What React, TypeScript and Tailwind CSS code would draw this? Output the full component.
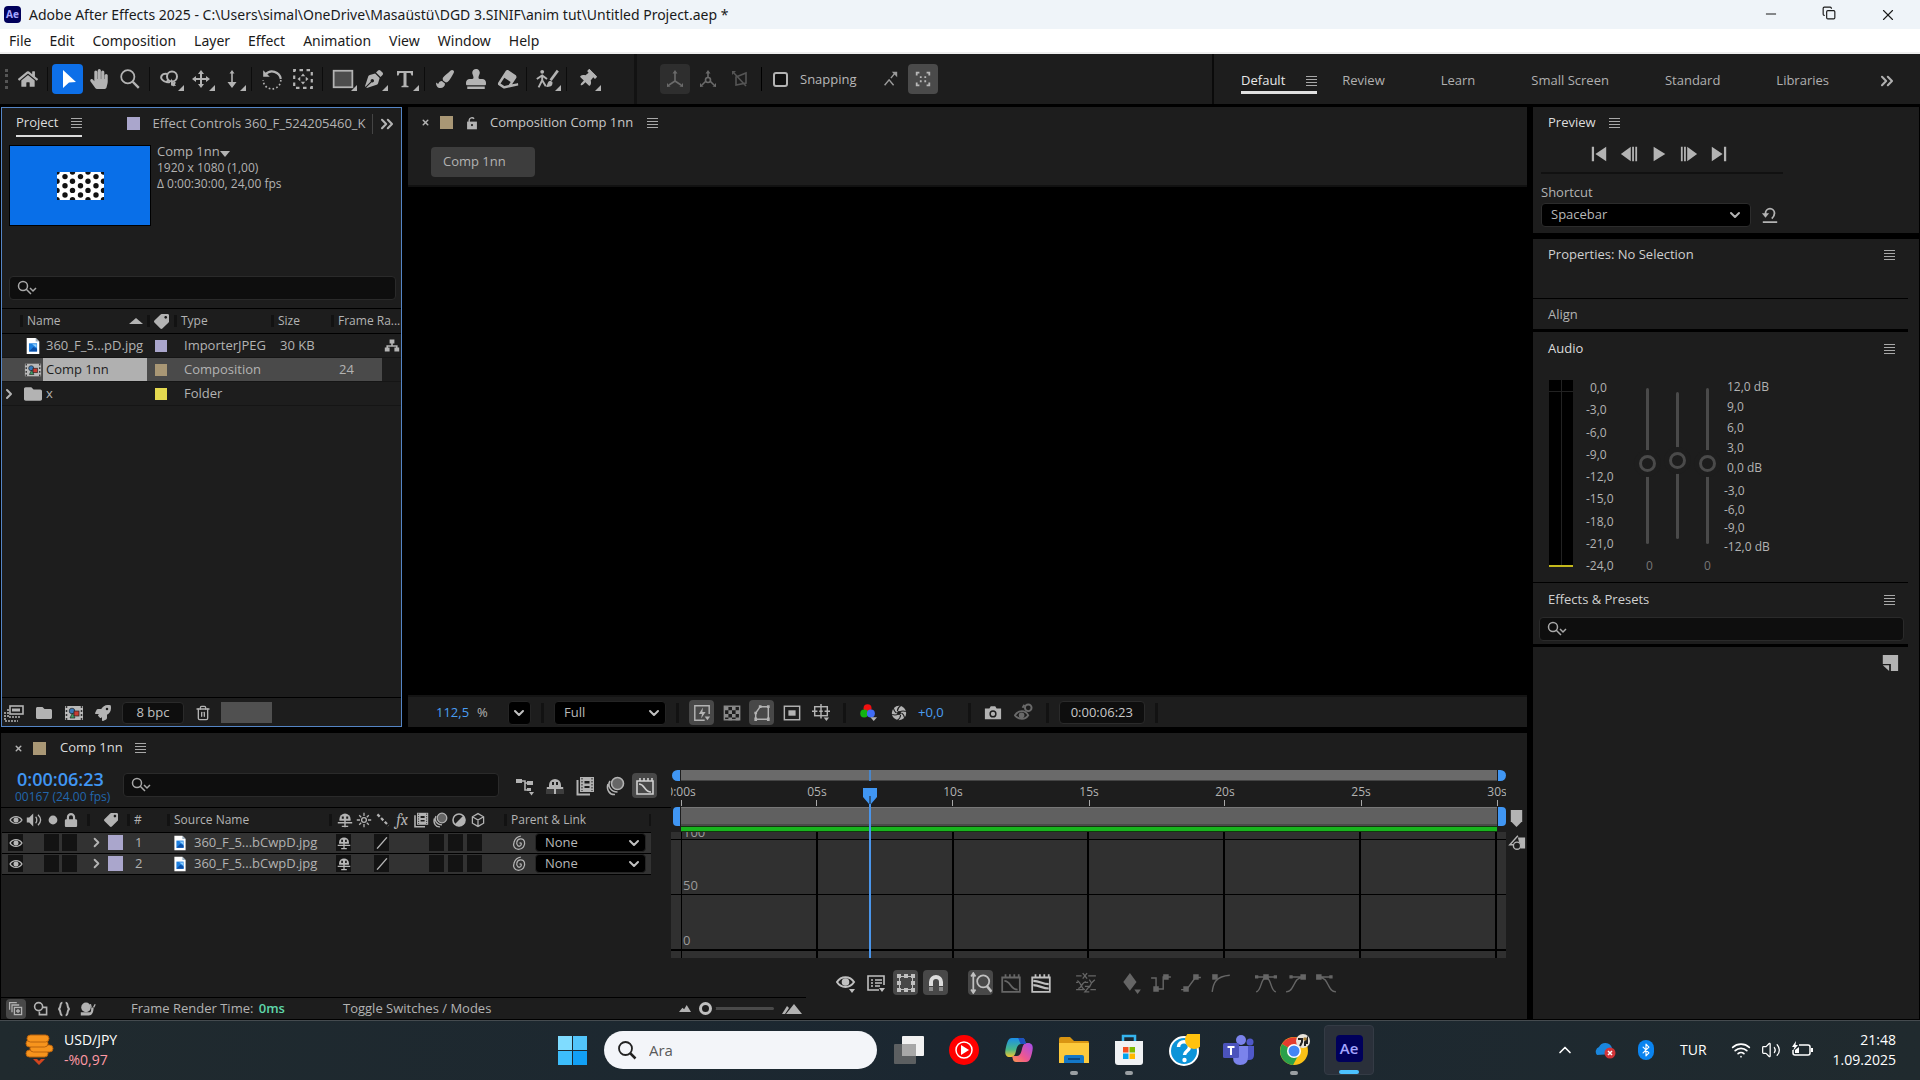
import React from "react";
import {
  Bluetooth,
  ChevronDown,
  ChevronRight,
  ChevronsRight,
  ChevronUp,
  Copy,
  Minus,
  Trash2,
  Volume2,
  Wifi,
  X,
} from "lucide-react";
import {
  FaEraser,
  FaFolder,
  FaHandPaper,
  FaHome,
  FaLock,
  FaPaintBrush,
  FaPenNib,
  FaRocket,
  FaStamp,
  FaTag,
  FaThumbtack,
} from "react-icons/fa";

const stroke = {
  fill: "none",
  stroke: "currentColor",
  strokeWidth: 1.6,
} as const;

const GLYPHS: Record<string, React.ReactNode> = {
  arrow: <path d="M5 1l13 12-7 .5L5 19z" fill="currentColor" />,
  zoom: (
    <g {...stroke}>
      <circle cx="8" cy="8" r="6" />
      <path d="M12.5 12.5L18 18" strokeWidth="2.2" />
    </g>
  ),
  orbit: (
    <g {...stroke} strokeWidth="2">
      <path d="M7 5C2 4 0 8 2 10.500s5 3 8 2.500" />
      <circle cx="12" cy="7.500" r="5" />
      <path d="M9 10.500l-3 3M15 13l-2 4" />
      <path d="M11 9.500v7l5 .5z" fill="currentColor" stroke="none" />
    </g>
  ),
  pan: (
    <g fill="currentColor">
      <path d="M10 1l3 4H7zM10 19l3-4H7zM1 10l4-3v6zM19 10l-4-3v6z" />
      <path d="M9 4h2v12H9zM4 9h12v2H4z" />
    </g>
  ),
  dolly: (
    <g fill="currentColor">
      <path d="M10 1l2.500 3.500h-5zM10 19l4.500-6h-9z" />
      <path d="M9.200 3h1.600v11H9.200z" />
    </g>
  ),
  rotate: (
    <g {...stroke} strokeWidth="2">
      <path d="M4 6a8 8 0 0 1 14 4" />
      <path d="M18 11a8 8 0 0 1-16 0" strokeDasharray="1.500 2" strokeWidth="1.500" />
      <path d="M2 2v6h6z" fill="currentColor" stroke="none" />
    </g>
  ),
  anchor: (
    <g {...stroke}>
      <rect x="2" y="2" width="16" height="16" strokeDasharray="3.200 3.200" strokeDashoffset="1.600" strokeWidth="2" />
      <path d="M10 5l2 2.500H8zM10 15l2-2.500H8zM5 10l2.500-2v4zM15 10l-2.500-2v4z" fill="currentColor" stroke="none" />
    </g>
  ),
  rect: (
    <rect x="1.500" y="2.500" width="17" height="15" fill="#4d4d4d" stroke="currentColor" strokeWidth="1.600" />
  ),
  type: (
    <path d="M2 2h16v4.500h-1.500L15.500 4h-4v12.500l2 .5v1.200h-7V17l2-.5V4h-4l-1 2.500H2z" fill="currentColor" />
  ),
  roto: (
    <g {...stroke}>
      <circle cx="6" cy="4" r="1.600" fill="currentColor" stroke="none" />
      <path d="M6 7v4l-3 6M6 11l3 5M1.500 10L6 7l4 3" />
      <path d="M19 3l-6 8" strokeWidth="2.200" />
      <path d="M13 11.500c-3 0-2 3.500-4 5 4 .5 6-1 5.500-4z" fill="currentColor" stroke="none" />
    </g>
  ),
  axisLocal: (
    <g {...stroke}>
      <path d="M10 3v9M10 12l-6 4M10 12l6 4" />
      <path d="M10 1l2.500 3.500h-5zM2 18v-4l3.500 3.500zM18 18v-4l-3.500 3.500z" fill="currentColor" stroke="none" />
    </g>
  ),
  axisWorld: (
    <g {...stroke}>
      <path d="M10 3v5M8 12l-4 4M12 12l4 4" />
      <circle cx="10" cy="11" r="2.500" />
      <path d="M10 1l2.500 3.500h-5zM2 18v-4l3.500 3.500zM18 18v-4l-3.500 3.500z" fill="currentColor" stroke="none" />
    </g>
  ),
  axisView: (
    <g {...stroke}>
      <path d="M3 3l13 14M6 8v8l10-2V4z" />
      <path d="M2 2h4L2 6z" fill="currentColor" stroke="none" />
    </g>
  ),
  snapEdge: (
    <g {...stroke}>
      <path d="M4 17l5-6 5 6M11 9l4-5" />
      <path d="M12 2h6v6z" fill="currentColor" stroke="none" />
    </g>
  ),
  snapBox: (
    <g {...stroke}>
      <path d="M3 6V3h3M14 3h3v3M17 14v3h-3M6 17H3v-3" strokeWidth="2" />
      <path d="M6.500 7h2v2h-2zM11.500 7h2v2h-2zM6.500 11.500h2v2h-2zM11.500 11.500h2v2h-2z" fill="currentColor" stroke="none" />
    </g>
  ),
  film: (
    <g>
      <rect x="1" y="3" width="18" height="14" fill="#b9b9b9" />
      <path d="M2.500 3v14M17.500 3v14" stroke="#333" strokeWidth="1.500" strokeDasharray="2 2" />
      <circle cx="8" cy="8" r="2.800" fill="#3a78b8" stroke="#222" strokeWidth=".7" />
      <rect x="10" y="8" width="5" height="5" fill="#c83c32" stroke="#222" strokeWidth=".7" />
      <path d="M8.500 10l2.500 5H6z" fill="#3f9a63" stroke="#222" strokeWidth=".7" />
    </g>
  ),
  jpg: (
    <g>
      <path d="M3 1h10l4 4v14H3z" fill="#fff" />
      <path d="M13 1v4h4z" fill="#9fb0c0" />
      <rect x="5.500" y="7" width="9" height="9" fill="#1c7fe0" />
      <path d="M5.500 16l5-5 4 2v3z" fill="#0b4fa8" />
      <path d="M9 8h5v4z" fill="#8fd0ff" />
    </g>
  ),
  flow: (
    <path
      d="M7 2h6v5h-2v2h6v3h2v5h-6v-5h2v-1H5v1h2v5H1v-5h2V9h6V7H7z"
      fill="currentColor"
    />
  ),
  interpret: (
    <g {...stroke}>
      <rect x="6" y="3" width="13" height="8" />
      <path d="M8 7h8" strokeWidth="3" />
      <path d="M4 6v8h12M1 9v9h13" strokeDasharray="2 1" />
    </g>
  ),
  fastPreview: (
    <g {...stroke}>
      <path d="M13 18H2V2h16v9" />
      <path d="M11 4l-4.500 7H10l-1 5 5-7h-3.500z" fill="currentColor" stroke="none" />
      <path d="M13 14h6l-3 4z" fill="currentColor" stroke="none" />
    </g>
  ),
  checker: (
    <g fill="currentColor">
      <rect x="1.500" y="2.500" width="17" height="15" {...stroke} />
      <path d="M2 3h4v4H2zM10 3h4v4h-4zM6 7h4v4H6zM14 7h4v4h-4zM2 11h4v4H2zM10 11h4v4h-4zM6 15h4v3H6zM14 15h4v3h-4z" />
    </g>
  ),
  mask: (
    <g {...stroke}>
      <path d="M3 17V10l5-7h9v14z" />
      <path d="M1.500 15h3v4h-3zM15.500 15h3v4h-3zM15.500 1.500h3v3h-3zM6.500 1.500h3v3h-3zM1.500 8.500h3v3h-3z" fill="currentColor" stroke="none" />
    </g>
  ),
  region: (
    <g {...stroke}>
      <rect x="1.500" y="2.500" width="17" height="15" />
      <rect x="6" y="7" width="8" height="6" fill="currentColor" stroke="none" />
    </g>
  ),
  grid: (
    <g {...stroke}>
      <rect x="3" y="3" width="14" height="10" />
      <path d="M10 0v16M0 8h6M8 8h4M14 8h6" />
      <path d="M13 15h6l-3 4z" fill="currentColor" stroke="none" />
    </g>
  ),
  rgb: (
    <g>
      <circle cx="9" cy="5.500" r="4.200" fill="#f01010" />
      <circle cx="5.500" cy="11" r="4.200" fill="#13b313" />
      <circle cx="12.500" cy="11" r="4.200" fill="#3f6bf5" />
      <path d="M12 15h7l-3.500 4z" fill="currentColor" />
    </g>
  ),
  aperture: (
    <g>
      <circle cx="10" cy="10" r="9" fill="currentColor" />
      <path
        d="M12 1c-3 2-4 3-4 6.500M18.500 8c-4-1-5.500-1-7.500 1M17 16c-1-4-1.500-5-4-6M8 19c3-2 4-3 4-6.500M1.500 12c4 1 5.500 1 7.500-1M3 4c1 4 1.500 5 4 6"
        stroke="#1d1d1d"
        strokeWidth="1.300"
        fill="none"
      />
      <circle cx="10" cy="10" r="2.500" fill="#1d1d1d" />
    </g>
  ),
  camera: (
    <g>
      <path d="M1 5h5l1.500-2.500h5L14 5h5v12H1z" fill="currentColor" />
      <circle cx="10" cy="11" r="3.200" fill="none" stroke="#1d1d1d" strokeWidth="1.600" />
    </g>
  ),
  showSnap: (
    <g {...stroke} strokeWidth="2">
      <path d="M1 13c4-6 11-6 14 0-3 5-10 5-14 0z" />
      <circle cx="8" cy="13" r="2" fill="currentColor" />
      <circle cx="15" cy="5" r="3.500" />
      <path d="M9 5l2-3" />
    </g>
  ),
  eye: (
    <g {...stroke} strokeWidth="2">
      <path d="M1.500 10c4-6.500 13-6.500 17 0-4 6.500-13 6.500-17 0z" />
      <circle cx="10" cy="10" r="2.600" fill="currentColor" />
    </g>
  ),
  speaker: (
    <g {...stroke}>
      <path d="M1 7h3l5-5v16l-5-5H1z" fill="currentColor" stroke="none" />
      <path d="M12 6c2 2 2 6 0 8M15 3.500c4 4 4 9 0 13" />
    </g>
  ),
  dot: <circle cx="10" cy="10" r="5.500" fill="currentColor" />,
  shy: (
    <g>
      <path d="M3 9a7 7 0 0 1 14 0v2H3z" fill="currentColor" />
      <path d="M1 13.500h18M10 9v10M6 18h8" stroke="currentColor" strokeWidth="1.800" />
      <path d="M6 5.500h2.500v3H6zM11.500 5.500H14v3h-2.500z" fill="#1d1d1d" />
    </g>
  ),
  sun: (
    <g {...stroke}>
      <circle cx="10" cy="10" r="3" />
      <path d="M10 1v4M10 15v4M1 10h4M15 10h4M4 4l2.500 2.500M16 4l-2.500 2.500M4 16l2.500-2.500M16 16l-2.500-2.500" />
    </g>
  ),
  quality: (
    <path d="M3 3l14 14" {...stroke} strokeWidth="2.800" strokeDasharray="4 2.500" />
  ),
  slash: <path d="M3 18L17 2" {...stroke} strokeWidth="2" />,
  frames: (
    <g>
      <path d="M2.500 4v14.500H15" {...stroke} strokeWidth="2" />
      <rect x="5" y="1" width="14" height="15" fill="currentColor" />
      <path d="M7 2v13M17 2v13" stroke="#1d1d1d" strokeWidth="1" strokeDasharray="1.500 1.500" />
      <path d="M9.500 5h5v2.500h-5zM9.500 10h5v2h-5z" fill="#1d1d1d" />
    </g>
  ),
  blur: (
    <g {...stroke}>
      <circle cx="12.500" cy="7.500" r="6" fill="#666" />
      <path d="M5 5c-3 5 1 11 7.500 11M3 8c-2 6 2 11 7 10.500" />
    </g>
  ),
  adjust: (
    <g>
      <circle cx="10" cy="10" r="7.500" {...stroke} strokeWidth="2" />
      <path d="M15.500 4.500a7.700 7.700 0 0 1-11 11z" fill="currentColor" />
    </g>
  ),
  cube: (
    <path d="M10 2l7 4v8l-7 4-7-4V6zM3 6l7 4 7-4M10 10v8" {...stroke} />
  ),
  minimap: (
    <g fill="currentColor">
      <path d="M1 3h6v4H1zM12 5h6v4h-6zM12 12h4v3h-4z" />
      <path d="M7 5h3v9h3M10 7h3" {...stroke} />
      <path d="M14 16h5l-2.500 3.500z" />
    </g>
  ),
  shyBig: (
    <g>
      <path d="M1 11h18v7H1z" fill="#3d3d3d" />
      <path d="M4 9a6 6 0 0 1 12 0v2H4z" fill="currentColor" />
      <path d="M2 12h16M10 9v9" stroke="currentColor" strokeWidth="2" />
      <path d="M7 6h2v3H7zM11 6h2v3h-2z" fill="#1d1d1d" />
    </g>
  ),
  graph: (
    <g {...stroke}>
      <path d="M2 5h16v13H2zM5 5V2M9 5V2M13 5V2M17 5V2" />
      <path d="M4 8c6 0 5 8 12 8" />
    </g>
  ),
  graphLines: (
    <g {...stroke}>
      <path d="M2 5h16v13H2zM5 5V2M9 5V2M13 5V2M17 5V2" />
      <path d="M3 8c6 0 8 3 14 3M3 12c6 0 8 3 14 3" strokeWidth="2" />
    </g>
  ),
  whip: (
    <path
      d="M9.500 10.500c1.500-2 3 .5 1.500 2.500-2 2.500-6 0-5-4C7 4 14 3.500 15.500 8c1.500 5-2 10-7.500 10-5 0-7-5-5.500-9C4 4 7 2 11 1.500"
      {...stroke}
    />
  ),
  layersToggle: (
    <g {...stroke}>
      <path d="M2 11V2h9M5 14V5h9" />
      <rect x="8" y="8" width="9" height="9" />
      <path d="M12.500 10v5M10 12.500h5" />
    </g>
  ),
  modes: (
    <g {...stroke} strokeWidth="2">
      <circle cx="7" cy="7" r="5" />
      <path d="M12 8h5v9H8v-4" />
    </g>
  ),
  braces: (
    <path
      d="M8 2c-4 0-1 7-5 8 4 1 1 8 5 8M12 2c4 0 1 7 5 8-4 1-1 8-5 8"
      {...stroke}
      strokeWidth="2.400"
    />
  ),
  snail: (
    <g fill="currentColor">
      <circle cx="7.500" cy="8" r="6" />
      <path d="M1 14h11c2 0 2-3 2-6h3c0 6-2 10-6 10H1z" />
      <path d="M14 8l-1-4M17 8l2-4" {...stroke} />
    </g>
  ),
  list: (
    <g {...stroke}>
      <path d="M13 17H2V3h16v9" />
      <path d="M5 7h2M9 7h7M5 10h2M9 10h7M5 13h2M9 13h5" strokeWidth="1.500" />
      <path d="M13 15h6l-3 4z" fill="currentColor" stroke="none" />
    </g>
  ),
  eyeMenu: (
    <g {...stroke} strokeWidth="2">
      <path d="M1 9c4-6.500 13-6.500 17 0-4 6.500-13 6.500-17 0z" />
      <circle cx="9.500" cy="9" r="2.800" fill="currentColor" />
      <path d="M13 16h6l-3 4z" fill="currentColor" stroke="none" />
    </g>
  ),
  transform: (
    <g {...stroke}>
      <rect x="3.500" y="3.500" width="13" height="13" strokeWidth="1" />
      <path
        d="M1 1h4v4H1zM8 1h4v4H8zM15 1h4v4h-4zM1 8h4v4H1zM15 8h4v4h-4zM1 15h4v4H1zM8 15h4v4H8zM15 15h4v4h-4z"
        fill="currentColor"
        stroke="none"
      />
    </g>
  ),
  magnet: (
    <g fill="none" strokeWidth="4">
      <path d="M5 13V9a5 5 0 0 1 10 0v4" stroke="#dcdcdc" />
      <path d="M5 14v4M15 14v4" stroke="#8a8a8a" />
    </g>
  ),
  autoZoom: (
    <g {...stroke}>
      <path d="M3 2v16M1 4l2-3 2 3M1 16l2 3 2-3" />
      <circle cx="12" cy="8.500" r="5.500" />
      <path d="M15.500 13l4 5" strokeWidth="2.400" />
    </g>
  ),
  xyz: (
    <g {...stroke} strokeWidth="1.200">
      <path d="M1 3.500h5M12 3.500h7M1 9.500h2M9 9.500h3M1 16h7M14 16h5" />
      <path d="M7 1l4 5M11 1L7 6M13 7l2 3 3-3M15 10l-2 4M9 13h4l-4 5h4M2 8c3 0 4 8 7 8M3 15c3 0 3-6 7-6" />
    </g>
  ),
  diamond: (
    <g fill="currentColor">
      <path d="M9 1l6 8-6 8-6-8z" />
      <path d="M13 16h6l-3 4z" />
    </g>
  ),
  hold: (
    <g fill="currentColor">
      <path d="M3 13h5v5H3zM12 2h5v5h-5z" />
      <path d="M1 5.500h4.500V15M7 15.500h5V4.500h7" {...stroke} strokeWidth="1.300" />
    </g>
  ),
  linear: (
    <g fill="currentColor">
      <path d="M3 13h5v5H3zM12 2h5v5h-5z" />
      <path d="M1 16h5l8-11h5" {...stroke} strokeWidth="1.300" />
    </g>
  ),
  autoBez: (
    <g fill="currentColor">
      <path d="M2 2h5v5H2z" />
      <path d="M2 18C3 10 5 4 18 3" {...stroke} strokeWidth="1.300" />
    </g>
  ),
  easy: (
    <g fill="currentColor">
      <path d="M7.500 2h5v5h-5zM0 3h3v3H0zM17 3h3v3h-3z" />
      <path d="M1 4.500h18M1 18c5 0 4-13 9-13s4 13 9 13" {...stroke} strokeWidth="1.300" />
    </g>
  ),
  easeIn: (
    <g fill="currentColor">
      <path d="M14 2h5v5h-5zM4 3h3v3H4z" />
      <path d="M5 4.500h12M1 18c8 0 6-13 15-13" {...stroke} strokeWidth="1.300" />
    </g>
  ),
  easeOut: (
    <g fill="currentColor">
      <path d="M1 2h5v5H1zM13 3h3v3h-3z" />
      <path d="M3 4.500h12M4 5c9 0 7 13 15 13" {...stroke} strokeWidth="1.300" />
    </g>
  ),
  marker: (
    <path d="M4 1h12v12l-6 6-6-6z" fill="currentColor" />
  ),
  compButton: (
    <g>
      <path d="M11 4h8v12h-5z" fill="currentColor" />
      <path d="M11 2L2 12h8" {...stroke} />
      <circle cx="10" cy="13" r="4" {...stroke} fill="#1d1d1d" />
    </g>
  ),
  first: (
    <g fill="currentColor">
      <path d="M2 2h2.500v16H2zM18 2v16L6 10z" />
    </g>
  ),
  prev: (
    <g fill="currentColor">
      <path d="M12 2v16L1 10zM13.500 2h2v16h-2zM17 2h2v16h-2z" />
    </g>
  ),
  play: <path d="M4 2l13 8-13 8z" fill="currentColor" />,
  next: (
    <g fill="currentColor">
      <path d="M8 2v16l11-8zM4.500 2h2v16h-2zM1 2h2v16H1z" />
    </g>
  ),
  last: (
    <g fill="currentColor">
      <path d="M15.500 2H18v16h-2.500zM2 2v16l12-8z" />
    </g>
  ),
  reset: (
    <g {...stroke} strokeWidth="2">
      <path d="M5 10V8a5 5 0 0 1 10 0c0 3-1 4-3 6M2 18h16" />
      <path d="M1 8h8l-4 5z" fill="currentColor" stroke="none" />
    </g>
  ),
  newBin: (
    <g>
      <path d="M2 1h17v18h-8v-8H2z" fill="currentColor" />
      <path d="M2 12.500h7V19z" fill="currentColor" />
    </g>
  ),
  lockOpen: (
    <g {...stroke} strokeWidth="2">
      <rect x="4" y="9" width="12" height="9" fill="currentColor" />
      <path d="M6 9V6a4 4 0 0 1 7-2" />
      <circle cx="10" cy="13" r="1.500" fill="#1d1d1d" stroke="none" />
    </g>
  ),
};

const Glyph: React.FC<{ name: string; className?: string }> = ({
  name,
  className = "size-4",
}) => (
  <svg viewBox="0 0 20 20" className={`shrink-0 ${className}`} aria-hidden="true">
    {GLYPHS[name]}
  </svg>
);

const MenuLines: React.FC = () => (
  <button
    type="button"
    aria-label="Panel menu"
    className="flex w-[11px] shrink-0 flex-col gap-[2px]"
  >
    <span className="h-px w-full bg-[#a8a8a8]" />
    <span className="h-px w-full bg-[#a8a8a8]" />
    <span className="h-px w-full bg-[#a8a8a8]" />
    <span className="h-px w-full bg-[#a8a8a8]" />
  </button>
);

const Divider: React.FC<{ className?: string }> = ({ className = "" }) => (
  <span className={`w-[3px] shrink-0 bg-[#121212] ${className}`} />
);

const SearchBox: React.FC<{ label: string; className?: string }> = ({
  label,
  className = "",
}) => (
  <div className={`relative ${className}`}>
    <input
      type="text"
      aria-label={label}
      className="block h-6 w-full rounded border border-[#2a2a2a] bg-[#0e0e0e] pl-8 text-xs text-[#c8c8c8] outline-none"
    />
    <svg viewBox="0 0 22 16" className="absolute top-1 left-2 h-4 w-[22px]">
      <g fill="none" stroke="#a8a8a8" strokeWidth="1.500">
        <circle cx="6" cy="6" r="4.500" />
        <path d="M9 9l5 5M13 8l3 3 3-3" />
      </g>
    </svg>
  </div>
);

const DropDown: React.FC<{
  label: string;
  value: string;
  className?: string;
}> = ({ label, value, className = "" }) => (
  <div className={`relative ${className}`}>
    <select
      aria-label={label}
      className="block size-full appearance-none rounded border border-[#242424] bg-black pl-[9px] text-[13px] leading-none text-[#b8b8b8] outline-none"
    >
      <option>{value}</option>
    </select>
    <ChevronDown
      className="pointer-events-none absolute inset-y-0 right-1 my-auto size-4 text-[#c0c0c0]"
      strokeWidth={3}
    />
  </div>
);

const Tool: React.FC<{
  label: string;
  active?: boolean;
  more?: boolean;
  children: React.ReactNode;
}> = ({ label, active, more, children }) => (
  <button
    type="button"
    aria-label={label}
    className={`relative flex h-[30px] w-[31px] shrink-0 items-center justify-center rounded ${
      active ? "bg-[#0d6fe8] text-white" : "text-[#b3b3b3]"
    }`}
  >
    {children}
    {more && (
      <span className="absolute right-px bottom-[3px] border-3 border-transparent border-r-[#b3b3b3] border-b-[#b3b3b3]" />
    )}
  </button>
);

const ToolGap: React.FC = () => (
  <span className="flex w-[9px] shrink-0 justify-center">
    <span className="h-6 w-px bg-[#0c0c0c]" />
  </span>
);

const TitleBar: React.FC = () => (
  <header className="font-['Noto_Sans','Open_Sans',sans-serif]">
    <div className="flex h-[29px] items-center bg-[#eff4f9] text-[#1a1a1a]">
      <span className="ml-1 flex size-[17px] items-center justify-center rounded-sm bg-[#00005b] text-[10px] font-bold text-[#a5a5ff]">
        Ae
      </span>
      <h1 className="ml-2 flex-1 text-sm">
        Adobe After Effects 2025 -
        C:\Users\simal\OneDrive\Masaüstü\DGD 3.SINIF\anim tut\Untitled
        Project.aep *
      </h1>
      <div className="flex pr-[2px]">
        <button type="button" aria-label="Minimize" className="flex w-[58px] justify-center">
          <Minus className="size-4" strokeWidth={1.500} />
        </button>
        <button type="button" aria-label="Restore" className="flex w-[58px] justify-center">
          <Copy className="size-[14px] rotate-90 -scale-y-100" strokeWidth={2} />
        </button>
        <button type="button" aria-label="Close" className="flex w-[60px] justify-center">
          <X className="size-[18px]" strokeWidth={1.500} />
        </button>
      </div>
    </div>
    <nav className="flex h-[25px] items-center gap-[18px] border-b-2 border-[#efefef] bg-white pl-[9px] text-sm text-[#1a1a1a]">
      {[
        "File",
        "Edit",
        "Composition",
        "Layer",
        "Effect",
        "Animation",
        "View",
        "Window",
        "Help",
      ].map((item) => (
        <button type="button" key={item}>
          {item}
        </button>
      ))}
    </nav>
  </header>
);

const Toolbar: React.FC = () => (
  <div className="flex h-[50px] items-stretch bg-[#1d1d1d]">
    <div className="flex w-[634px] shrink-0 items-center">
      <span className="mr-1 ml-[5px] h-5 border-l-3 border-dotted border-[#555]" />
      <Tool label="Home">
        <FaHome className="size-5" />
      </Tool>
      <ToolGap />
      <Tool label="Selection" active>
        <Glyph name="arrow" className="size-5" />
      </Tool>
      <Tool label="Hand">
        <FaHandPaper className="size-5" />
      </Tool>
      <Tool label="Zoom">
        <Glyph name="zoom" className="size-[22px]" />
      </Tool>
      <ToolGap />
      <Tool label="Orbit" more>
        <Glyph name="orbit" className="size-5" />
      </Tool>
      <Tool label="Pan" more>
        <Glyph name="pan" className="size-5" />
      </Tool>
      <Tool label="Dolly" more>
        <Glyph name="dolly" className="size-5" />
      </Tool>
      <ToolGap />
      <Tool label="Rotate">
        <Glyph name="rotate" className="size-[22px]" />
      </Tool>
      <Tool label="Anchor point">
        <Glyph name="anchor" className="size-[22px]" />
      </Tool>
      <ToolGap />
      <Tool label="Rectangle" more>
        <Glyph name="rect" className="size-[22px]" />
      </Tool>
      <Tool label="Pen" more>
        <FaPenNib className="size-[18px]" />
      </Tool>
      <Tool label="Type" more>
        <Glyph name="type" className="size-5" />
      </Tool>
      <ToolGap />
      <Tool label="Brush">
        <FaPaintBrush className="size-[18px]" />
      </Tool>
      <Tool label="Clone stamp">
        <FaStamp className="size-5" />
      </Tool>
      <Tool label="Eraser">
        <FaEraser className="size-5 -rotate-12" />
      </Tool>
      <ToolGap />
      <Tool label="Roto brush" more>
        <Glyph name="roto" className="size-6" />
      </Tool>
      <ToolGap />
      <Tool label="Puppet pin" more>
        <FaThumbtack className="size-[18px] rotate-45" />
      </Tool>
    </div>
    <Divider />
    <div className="flex flex-1 items-center pl-[23px]">
      <button type="button" aria-label="Local axis" className="flex h-[30px] w-[30px] items-center justify-center rounded bg-[#2e2e2e] text-[#6a6a6a]">
        <Glyph name="axisLocal" className="size-5" />
      </button>
      <button type="button" aria-label="World axis" className="ml-2 text-[#6a6a6a]">
        <Glyph name="axisWorld" className="size-5" />
      </button>
      <button type="button" aria-label="View axis" className="ml-3 text-[#555]">
        <Glyph name="axisView" className="size-5" />
      </button>
      <span className="mx-[11px] h-6 w-px bg-black" />
      <label className="flex items-center gap-3 text-[13px] text-[#b8b8b8]">
        <input
          type="checkbox"
          className="size-[15px] appearance-none rounded-[3px] border-2 border-[#b3b3b3] bg-[#111]"
        />
        <span className="pt-[2px]">Snapping</span>
      </label>
      <button type="button" aria-label="Snap to edges" className="ml-6 text-[#9a9a9a]">
        <Glyph name="snapEdge" className="size-[18px]" />
      </button>
      <button type="button" aria-label="Snap to features" className="ml-[9px] flex h-[30px] w-[30px] items-center justify-center rounded bg-[#4a4a4a] text-[#b8b8b8]">
        <Glyph name="snapBox" className="size-[18px]" />
      </button>
    </div>
    <span className="w-[2px] bg-[#0a0a0a]" />
    <nav className="flex items-center gap-[56px] pt-[3px] pr-[23px] pl-[27px] text-[13px] text-[#b0b0b0]">
      <div className="-mr-[31px] flex items-center gap-[21px] border-b-3 border-[#e0e0e0] pt-1 pb-px text-[#e8e8e8]">
        <button type="button">Default</button>
        <MenuLines />
      </div>
      {["Review", "Learn", "Small Screen", "Standard", "Libraries"].map((ws) => (
        <button type="button" key={ws}>
          {ws}
        </button>
      ))}
      <button type="button" aria-label="More workspaces" className="-ml-[8px]">
        <ChevronsRight className="size-5" strokeWidth={2.500} />
      </button>
    </nav>
  </div>
);

const HeadSep: React.FC = () => (
  <span className="mr-1 h-3 w-[3px] shrink-0 bg-[#121212]" />
);

const ProjectPanel: React.FC = () => {
  const rows = [
    { icon: "jpg", name: "360_F_5...pD.jpg", color: "bg-[#aaa6cc]", type: "ImporterJPEG", size: "30 KB", rate: "" },
    { icon: "film", name: "Comp 1nn", color: "bg-[#a99775]", type: "Composition", size: "", rate: "24" },
    { icon: "folder", name: "x", color: "bg-[#e4d94f]", type: "Folder", size: "", rate: "" },
  ];

  return (
    <section className="flex w-[401px] shrink-0 flex-col border border-[#5585c5] bg-[#1d1d1d] text-[13px] text-[#b3b3b3]">
      <div className="flex h-[31px] items-center pr-1 pl-[14px]">
        <div className="mt-[3px] flex items-center gap-[13px] border-b-2 border-[#dcdcdc] pb-[3px] text-[#dcdcdc]">
          <button type="button">Project</button>
          <MenuLines />
        </div>
        <span className="ml-[45px] size-[13px] shrink-0 bg-[#aaa6cc]" />
        <button
          type="button"
          className="ml-3 h-5 flex-1 overflow-hidden border-r border-[#444] text-left whitespace-nowrap"
        >
          Effect Controls 360_F_524205460_K
        </button>
        <ChevronsRight className="ml-1 size-5" strokeWidth={2.500} />
      </div>

      <div className="mt-[6px] flex h-[81px] gap-[6px] px-[7px]">
        <div className="flex w-[142px] shrink-0 items-center justify-center border border-black bg-[#096fe8]">
          <svg viewBox="0 0 47 28" className="h-7 w-[47px]">
            <rect width="47" height="28" fill="#fff" />
            {[0, 1, 2, 3, 4, 5, 6].map((r) =>
              [0, 1, 2, 3].map((c) => (
                <circle
                  key={`${r}-${c}`}
                  cx={c * 15.500 + (r % 2 ? 8 : 0)}
                  cy={r * 4.600}
                  r="2.700"
                  fill="#111"
                />
              )),
            )}
          </svg>
        </div>
        <div>
          <p className="flex items-center leading-[13px]">
            Comp 1nn
            <span className="mt-1 border-x-[5px] border-t-[6px] border-x-transparent border-t-[#b3b3b3]" />
          </p>
          <p className="pt-[2px] text-xs leading-4">1920 x 1080 (1,00)</p>
          <p className="text-xs leading-4">Δ 0:00:30:00, 24,00 fps</p>
        </div>
      </div>

      <SearchBox label="Search project" className="mt-[50px] mr-[5px] ml-[7px]" />

      <table className="mt-2 w-full table-fixed border-t border-black">
        <colgroup>
          <col className="w-[145px]" />
          <col className="w-[27px]" />
          <col className="w-[97px]" />
          <col className="w-[60px]" />
          <col />
          <col className="w-[19px]" />
        </colgroup>
        <thead>
          <tr className="h-[25px] border-b border-black text-left text-xs">
            <th className="font-normal">
              <span className="flex items-center pr-1 pl-[18px]">
                <HeadSep />
                <span className="flex-1">Name</span>
                <span className="border-x-[7px] border-b-[6px] border-x-transparent border-b-[#b3b3b3]" />
              </span>
            </th>
            <th className="font-normal">
              <span className="flex items-center">
                <HeadSep />
                <FaTag className="size-[15px] rotate-90" />
              </span>
            </th>
            <th className="font-normal">
              <span className="flex items-center">
                <HeadSep />
                Type
              </span>
            </th>
            <th className="font-normal">
              <span className="flex items-center">
                <HeadSep />
                Size
              </span>
            </th>
            <th colSpan={2} className="font-normal">
              <span className="flex items-center">
                <HeadSep />
                <span className="whitespace-nowrap">Frame Ra...</span>
              </span>
            </th>
          </tr>
        </thead>
        <tbody>
          {rows.map((row, i) => {
            const cell = i === 1 ? "bg-[#4a4a4a] p-0" : "p-0";
            return (
              <tr key={row.name} className="h-6 border-b border-[#151515]">
                <td className={cell}>
                  <span className="flex h-[23px] items-center">
                    <span className="flex w-[21px] shrink-0 justify-center">
                      {row.icon === "folder" && (
                        <ChevronRight className="-ml-2 size-4" strokeWidth={3} />
                      )}
                    </span>
                    <span className="flex w-5 shrink-0 justify-center">
                      {row.icon === "folder" ? (
                        <FaFolder className="size-[18px]" />
                      ) : (
                        <Glyph name={row.icon} className="size-[18px]" />
                      )}
                    </span>
                    <span
                      className={`flex h-full flex-1 items-center overflow-hidden pl-[3px] whitespace-nowrap ${
                        i === 1 ? "bg-[#b0b0b0] text-[#1d1d1d]" : ""
                      }`}
                    >
                      {row.name}
                    </span>
                  </span>
                </td>
                <td className={cell}>
                  <span className={`ml-2 block size-3 ${row.color}`} />
                </td>
                <td className={`${cell} whitespace-nowrap`}>
                  <span className="pl-[10px]">{row.type}</span>
                </td>
                <td className={cell}>
                  <span className="pl-[9px]">{row.size}</span>
                </td>
                <td className={cell}>
                  <span className="pl-2">{row.rate}</span>
                </td>
                <td className="p-0">
                  {i === 0 && <Glyph name="flow" className="ml-[2px] size-4" />}
                </td>
              </tr>
            );
          })}
        </tbody>
      </table>
      <div className="flex-1" />

      <div className="flex h-[29px] items-center border-t border-black pt-px pl-[2px]">
        <button type="button" aria-label="Interpret footage" className="w-[29px]">
          <Glyph name="interpret" className="size-5" />
        </button>
        <button type="button" aria-label="New folder" className="w-[31px]">
          <FaFolder className="ml-[3px] size-4" />
        </button>
        <button type="button" aria-label="New composition" className="w-[31px]">
          <Glyph name="film" className="size-5" />
        </button>
        <button type="button" aria-label="Project settings" className="w-[27px]">
          <FaRocket className="size-4" />
        </button>
        <button
          type="button"
          className="h-[22px] w-[62px] rounded border border-[#2a2a2a] bg-[#0e0e0e] text-[#c0c0c0]"
        >
          8 bpc
        </button>
        <button type="button" aria-label="Delete" className="mr-[10px] ml-[11px]">
          <Trash2 className="size-4" strokeWidth={2} />
        </button>
        <span className="h-[21px] w-[51px] bg-[#505050]" />
      </div>
    </section>
  );
};

const footerButton =
  "flex h-[25px] w-[25px] shrink-0 items-center justify-center rounded";

const CompositionPanel: React.FC = () => (
  <section className="flex min-w-0 flex-1 flex-col bg-[#1d1d1d] text-[13px] text-[#b3b3b3]">
    <div className="flex h-[31px] items-center pl-[13px]">
      <button type="button" aria-label="Close tab">
        <X className="size-[9px]" strokeWidth={4} />
      </button>
      <span className="mr-[12px] ml-[10px] size-[13px] bg-[#a99775]" />
      <Glyph name="lockOpen" className="size-[14px]" />
      <span className="mr-[14px] ml-[11px] text-[#c8c8c8]">Composition Comp 1nn</span>
      <MenuLines />
    </div>
    <div className="flex h-[47px] items-center pl-[23px]">
      <button
        type="button"
        className="h-[30px] w-[104px] rounded bg-[#3d3d3d] pl-3 text-left"
      >
        Comp 1nn
      </button>
    </div>
    <div className="flex-1 border-t-2 border-[#111] bg-black" />
    <div className="flex h-[32px] items-center border-t-2 border-[#141414] pt-px">
      <button type="button" className="ml-7 text-[#4a9df3]">
        112,5
      </button>
      <span className="ml-2 w-[31px]">%</span>
      <DropDown label="Magnification" value="" className="h-6 w-[23px]" />
      <Divider className="mx-[10px] h-5" />
      <DropDown label="Resolution" value="Full" className="h-6 w-[112px]" />
      <Divider className="mx-[10px] h-5" />
      <button type="button" aria-label="Fast previews" className={`${footerButton} bg-[#484848]`}>
        <Glyph name="fastPreview" className="size-[18px]" />
      </button>
      <button type="button" aria-label="Transparency grid" className={`${footerButton} ml-[5px] text-[#8a8a8a]`}>
        <Glyph name="checker" className="size-[18px]" />
      </button>
      <button type="button" aria-label="Mask visibility" className={`${footerButton} ml-[5px] bg-[#484848]`}>
        <Glyph name="mask" className="size-[18px]" />
      </button>
      <button type="button" aria-label="Region of interest" className={`${footerButton} ml-[5px]`}>
        <Glyph name="region" className="size-[18px]" />
      </button>
      <button type="button" aria-label="Grid and guides" className={`${footerButton} ml-1`}>
        <Glyph name="grid" className="size-[18px]" />
      </button>
      <Divider className="mx-[10px] h-5" />
      <button type="button" aria-label="Show channel" className={footerButton}>
        <Glyph name="rgb" className="size-[19px]" />
      </button>
      <button type="button" aria-label="Reset exposure" className={`${footerButton} ml-[5px]`}>
        <Glyph name="aperture" className="size-[16px]" />
      </button>
      <button type="button" className="ml-[7px] text-[#4a9df3]">
        +0,0
      </button>
      <Divider className="mr-[10px] ml-6 h-5" />
      <button type="button" aria-label="Take snapshot" className={footerButton}>
        <Glyph name="camera" className="size-[18px]" />
      </button>
      <button type="button" aria-label="Show snapshot" className={`${footerButton} ml-[5px] text-[#6a6a6a]`}>
        <Glyph name="showSnap" className="size-[19px]" />
      </button>
      <Divider className="mx-[10px] h-5" />
      <button
        type="button"
        className="h-[23px] w-[86px] rounded border border-[#2a2a2a] bg-[#0e0e0e] text-[13px] text-[#c8c8c8]"
      >
        0:00:06:23
      </button>
      <Divider className="ml-[10px] h-5" />
    </div>
  </section>
);

const GainSlider: React.FC<{ label: string; value: number; className: string }> = ({
  label,
  value,
  className,
}) => (
  <input
    type="range"
    aria-label={label}
    min={0}
    max={100}
    defaultValue={value}
    className={`w-[17px] appearance-none bg-transparent [direction:rtl] [writing-mode:vertical-lr] [&::-webkit-slider-runnable-track]:w-[3px] [&::-webkit-slider-runnable-track]:rounded [&::-webkit-slider-runnable-track]:bg-[#4a4a4a] [&::-webkit-slider-thumb]:-ml-[7px] [&::-webkit-slider-thumb]:size-[17px] [&::-webkit-slider-thumb]:appearance-none [&::-webkit-slider-thumb]:rounded-full [&::-webkit-slider-thumb]:border-3 [&::-webkit-slider-thumb]:border-[#4a4a4a] [&::-webkit-slider-thumb]:bg-[#1d1d1d] [&::-webkit-slider-thumb]:shadow-[0_0_0_5px_#1d1d1d] ${className}`}
  />
);

const AudioPanel: React.FC = () => {
  const levels = ["0,0", "-3,0", "-6,0", "-9,0", "-12,0", "-15,0", "-18,0", "-21,0", "-24,0"];
  const boost = ["12,0 dB", "9,0", "6,0", "3,0", "0,0 dB"];
  const cut = ["-3,0", "-6,0", "-9,0", "-12,0 dB"];

  return (
    <div className="h-[251px] border-b border-black">
      <div className="flex h-[33px] items-center justify-between pr-[13px] pl-[15px]">
        <h2 className="text-[#dcdcdc]">Audio</h2>
        <MenuLines />
      </div>
      <div className="mt-[15px] flex pl-4 text-xs">
        <div className="grid h-[187px] w-6 grid-cols-2 grid-rows-[11px_1fr] gap-px border-b-2 border-[#c4b91c] bg-[#222]">
          <span className="bg-black" />
          <span className="bg-black" />
          <span className="bg-black" />
          <span className="bg-black" />
        </div>
        <ul className="ml-[13px] flex h-[194px] w-[53px] flex-col justify-between">
          {levels.map((level) => (
            <li key={level} className={level === "0,0" ? "pl-1" : ""}>
              {level}
            </li>
          ))}
        </ul>
        <div className="flex gap-[13px] pt-2 text-[#777]">
          <div className="flex w-[17px] flex-col items-center justify-between">
            <GainSlider label="Left gain" value={52} className="h-[156px]" />
            <output className="pl-1">0</output>
          </div>
          <div className="flex w-[17px] flex-col items-center pt-1">
            <GainSlider label="Master gain" value={54} className="h-[147px]" />
          </div>
          <div className="flex w-[17px] flex-col items-center justify-between">
            <GainSlider label="Right gain" value={52} className="h-[156px]" />
            <output>0</output>
          </div>
        </div>
        <div className="ml-2">
          <ul className="-mt-px flex h-[97px] flex-col justify-between pl-[3px]">
            {boost.map((gain) => (
              <li key={gain}>{gain}</li>
            ))}
          </ul>
          <ul className="mt-[7px] flex h-[72px] flex-col justify-between">
            {cut.map((gain) => (
              <li key={gain}>{gain}</li>
            ))}
          </ul>
        </div>
      </div>
    </div>
  );
};

const RightColumn: React.FC = () => (
  <aside className="mr-px flex w-[386px] shrink-0 flex-col gap-[6px] text-[13px] text-[#b3b3b3]">
    <section className="h-[126px] bg-[#1d1d1d] px-2">
      <div className="flex h-[31px] items-center gap-[13px] pl-[7px]">
        <h2 className="text-[#dcdcdc]">Preview</h2>
        <MenuLines />
      </div>
      <div className="flex h-[36px] w-[242px] items-center gap-3 border-b-2 border-[#111] pb-[2px] pl-[49px]">
        {["first", "prev", "play", "next", "last"].map((name) => (
          <button type="button" key={name} aria-label={name}>
            <Glyph name={name} className="size-[18px]" />
          </button>
        ))}
      </div>
      <label htmlFor="shortcut" className="mt-[9px] block">
        Shortcut
      </label>
      <div className="flex items-center gap-[10px]">
        <div className="relative h-6 w-[210px]">
          <select
            id="shortcut"
            className="block size-full appearance-none rounded border border-[#2c2c2c] bg-black pl-[9px] text-[13px] text-[#b8b8b8]"
          >
            <option>Spacebar</option>
          </select>
          <ChevronDown
            className="pointer-events-none absolute top-1 right-2 size-4"
            strokeWidth={3}
          />
        </div>
        <button type="button" aria-label="Reset">
          <Glyph name="reset" className="size-[18px]" />
        </button>
      </div>
    </section>

    <section className="flex flex-1 flex-col bg-[#1d1d1d] pr-[11px]">
      <div className="flex h-[60px] items-start justify-between border-b border-black pr-[13px] pl-[15px]">
        <h2 className="mt-[6px] text-[#d0d0d0]">Properties: No Selection</h2>
        <span className="mt-[11px]">
          <MenuLines />
        </span>
      </div>
      <button
        type="button"
        className="h-[33px] border-b-3 border-black pt-[2px] pl-[15px] text-left"
      >
        Align
      </button>
      <AudioPanel />
      <div className="border-b-3 border-black pb-[3px]">
        <div className="flex h-[34px] items-center justify-between pr-[13px] pl-[15px]">
          <h2 className="text-[#d0d0d0]">Effects &amp; Presets</h2>
          <MenuLines />
        </div>
        <SearchBox label="Search effects" className="mr-1 ml-[6px]" />
      </div>
      <div className="flex flex-1 items-start justify-end pt-[7px] pr-[9px]">
        <button type="button" aria-label="New bin">
          <Glyph name="newBin" className="size-[18px]" />
        </button>
      </div>
    </section>
  </aside>
);

const SwitchBox: React.FC<{ name?: string }> = ({ name }) => (
  <span className="flex h-[17px] w-[15px] shrink-0 items-center justify-center bg-[#131313] text-[#b8b8b8]">
    {name && <Glyph name={name} className="size-[14px]" />}
  </span>
);

const LayerTable: React.FC = () => (
  <table className="ml-px w-[649px] table-fixed">
    <colgroup>
      <col className="w-[85px]" />
      <col className="w-10" />
      <col className="w-10" />
      <col className="w-[162px]" />
      <col className="w-[175px]" />
      <col />
    </colgroup>
    <thead>
      <tr className="h-6 border-b border-black text-left text-xs">
        <th className="p-0 font-normal">
          <span className="flex items-center gap-[3px] pl-[7px]">
            <Glyph name="eye" className="size-[14px]" />
            <Glyph name="speaker" className="size-4" />
            <Glyph name="dot" className="size-4" />
            <FaLock className="size-[14px]" />
          </span>
        </th>
        <th className="p-0 font-normal">
          <span className="flex items-center">
            <HeadSep />
            <FaTag className="ml-[10px] size-[14px] rotate-90" />
          </span>
        </th>
        <th className="p-0 font-normal">
          <span className="flex items-center">
            <HeadSep />#
          </span>
        </th>
        <th className="p-0 font-normal">
          <span className="flex items-center">
            <HeadSep />
            Source Name
          </span>
        </th>
        <th className="p-0 font-normal">
          <span className="flex items-center gap-[3px]">
            <span className="-mr-[2px] h-3 w-[3px] bg-[#121212]" />
            <span className="w-px" />
            <Glyph name="shy" />
            <Glyph name="sun" />
            <Glyph name="quality" />
            <i className="w-4 text-center font-serif text-base leading-none">fx</i>
            <Glyph name="frames" />
            <Glyph name="blur" />
            <Glyph name="adjust" />
            <Glyph name="cube" />
          </span>
        </th>
        <th className="p-0 font-normal">
          <span className="flex items-center">
            <HeadSep />
            <span className="flex-1">Parent &amp; Link</span>
            <span className="h-3 w-[2px] bg-[#121212]" />
          </span>
        </th>
      </tr>
    </thead>
    <tbody className="text-[13px]">
      {["1", "2"].map((index) => (
        <tr key={index} className="h-[21px] border-b border-black bg-[#323232]">
          <td className="p-0">
            <span className="flex items-center gap-[3px] pl-[6px]">
              <SwitchBox name="eye" />
              <span className="w-[15px]" />
              <SwitchBox />
              <SwitchBox />
            </span>
          </td>
          <td className="p-0">
            <span className="flex items-center">
              <ChevronRight className="mr-1 ml-[2px] size-[15px]" strokeWidth={3} />
              <span className="size-[15px] bg-[#aaa6cc]" />
            </span>
          </td>
          <td className="p-0 pl-2">{index}</td>
          <td className="p-0">
            <span className="flex items-center gap-[6px] pl-[5px] whitespace-nowrap">
              <Glyph name="jpg" className="size-4" />
              360_F_5...bCwpD.jpg
            </span>
          </td>
          <td className="p-0">
            <span className="flex items-center gap-[4px] pl-[7px]">
              <SwitchBox name="shy" />
              <span className="w-[15px]" />
              <SwitchBox name="slash" />
              <span className="mr-[2px] w-[30px]" />
              <SwitchBox />
              <SwitchBox />
              <SwitchBox />
            </span>
          </td>
          <td className="p-0">
            <span className="flex items-center gap-[7px] pl-2">
              <Glyph name="whip" className="size-4" />
              <DropDown label={`Parent of layer ${index}`} value="None" className="h-[19px] w-[111px]" />
            </span>
          </td>
        </tr>
      ))}
    </tbody>
  </table>
);

const TIMELINE_SECONDS = 30;
const PLAYHEAD = (167 / 24 / TIMELINE_SECONDS) * 100;

const GraphEditor: React.FC = () => {
  const marks = ["0:00s", "05s", "10s", "15s", "20s", "25s", "30s"];

  return (
    <div className="flex min-w-0 flex-1 flex-col">
      <div className="flex">
        <div className="relative min-w-0 flex-1 overflow-hidden text-xs">
          <div className="flex h-[11px]">
            <span className="mr-px ml-px w-2 rounded-l-full bg-[#4096f3]" />
            <span className="flex-1 border-b border-[#444] bg-[#6a6a6a]" />
            <span className="ml-px w-2 rounded-r-full bg-[#4096f3]" />
          </div>
          <div className="relative mr-[9px] ml-[10px] h-[26px]">
            {marks.map((mark, i) => (
              <span
                key={mark}
                className="absolute top-[3px] flex w-10 -translate-x-1/2 flex-col items-center"
                style={{ left: `${(i * 100) / 6}%` }}
              >
                {mark}
                <span className="h-[6px] w-px bg-[#a8a8a8]" />
              </span>
            ))}
          </div>
          <div className="flex h-[19px]">
            <span className="mr-px ml-[2px] w-[7px] rounded-l bg-[#4096f3]" />
            <span className="flex-1 border-t border-b-2 border-t-[#777] border-b-[#4a4a4a] bg-[#606060]" />
            <span className="ml-px w-2 rounded-r bg-[#4096f3]" />
          </div>
          <div className="mr-[9px] ml-[10px] h-[6px] border-y border-y-[#12380f] bg-[#18b41e]" />
          <div className="relative h-[126px] bg-[#303030] pr-[9px] pl-[10px] text-[13px] text-[#9a9a9a]">
            <div className="grid h-full grid-cols-6 border-l border-black">
              {marks.slice(1).map((mark) => (
                <span key={mark} className="border-r-2 border-black" />
              ))}
            </div>
            <div className="absolute inset-x-0 top-0 h-2 overflow-hidden border-b border-black">
              <span className="absolute bottom-0 left-3 leading-none">100</span>
            </div>
            <div className="absolute inset-x-0 top-2 flex h-[55px] items-end border-b border-black pl-3">
              50
            </div>
            <div className="absolute inset-x-0 top-[63px] flex h-[56px] items-end border-b-2 border-black pl-3">
              0
            </div>
          </div>
          <div className="pointer-events-none absolute inset-y-0 right-[9px] left-[10px]">
            <div
              className="absolute inset-y-0 flex w-4 -translate-x-1/2 flex-col items-center"
              style={{ left: `${PLAYHEAD}%` }}
            >
              <span className="mb-[6px] h-[11px] w-[2px] bg-[#4a86c8]" />
              <svg viewBox="0 0 14 17" className="h-[17px] w-[14px]">
                <path d="M0 1h14v9l-6 7H6l-6-7z" fill="#4096f3" />
                <path d="M7 9v8" stroke="#1d1d1d" />
              </svg>
              <span className="w-[2px] flex-1 bg-[#4a95ea]" />
            </div>
          </div>
        </div>
        <div className="flex w-[21px] flex-col items-center gap-[6px] pt-[39px]">
          <Glyph name="marker" className="size-[19px]" />
          <Glyph name="compButton" className="size-[18px]" />
        </div>
      </div>

      <div className="mt-3 flex items-center pl-[162px] text-[#c0c0c0]">
        <button type="button" aria-label="Choose properties" className={footerButton}>
          <Glyph name="eyeMenu" className="size-5" />
        </button>
        <button type="button" aria-label="Graph type" className={`${footerButton} ml-[5px]`}>
          <Glyph name="list" className="size-5" />
        </button>
        <button type="button" aria-label="Transform box" className={`${footerButton} ml-[5px] bg-[#484848]`}>
          <Glyph name="transform" className="size-5" />
        </button>
        <button type="button" aria-label="Snap" className={`${footerButton} ml-[5px] bg-[#484848]`}>
          <Glyph name="magnet" className="size-5" />
        </button>
        <button type="button" aria-label="Auto zoom" className={`${footerButton} ml-5 bg-[#484848]`}>
          <Glyph name="autoZoom" className="size-[22px]" />
        </button>
        <button type="button" aria-label="Fit selection" className={`${footerButton} ml-[5px] text-[#666]`}>
          <Glyph name="graph" className="size-[22px]" />
        </button>
        <button type="button" aria-label="Fit all" className={`${footerButton} ml-[5px]`}>
          <Glyph name="graphLines" className="size-[22px]" />
        </button>
        <button type="button" aria-label="Separate dimensions" className={`${footerButton} ml-5 text-[#666]`}>
          <Glyph name="xyz" className="size-[22px]" />
        </button>
        <div className="ml-5 flex gap-[5px] text-[#666]">
          {["diamond", "hold", "linear", "autoBez"].map((name) => (
            <button type="button" key={name} aria-label={name} className={footerButton}>
              <Glyph name={name} className="size-[22px]" />
            </button>
          ))}
        </div>
        <div className="ml-5 flex gap-[5px] text-[#666]">
          {["easy", "easeIn", "easeOut"].map((name) => (
            <button type="button" key={name} aria-label={name} className={footerButton}>
              <Glyph name={name} className="size-[22px]" />
            </button>
          ))}
        </div>
      </div>
    </div>
  );
};

const TimelinePanel: React.FC = () => (
  <section className="flex h-[286px] shrink-0 flex-col bg-[#1d1d1d] text-[13px] text-[#b3b3b3]">
    <div className="flex h-[30px] items-center pl-[13px]">
      <button type="button" aria-label="Close tab">
        <X className="size-[9px]" strokeWidth={4} />
      </button>
      <span className="mr-[14px] ml-[10px] size-[13px] bg-[#a99775]" />
      <span className="mr-3 text-[#dcdcdc]">Comp 1nn</span>
      <MenuLines />
    </div>
    <div className="flex flex-1">
      <div className="flex w-[670px] shrink-0 flex-col">
        <div className="flex h-[45px] border-b border-black">
          <div className="w-[122px] pl-[14px]">
            <p className="pt-[5px] pl-[2px] text-lg leading-[22px] font-semibold text-[#4096f3]">
              0:00:06:23
            </p>
            <p className="text-xs leading-[14px] text-[#2267ad]">00167 (24.00 fps)</p>
          </div>
          <SearchBox label="Search layers" className="mt-[10px] w-[376px]" />
          <div className="mt-[10px] ml-[13px] flex gap-[5px]">
            {["minimap", "shyBig", "frames", "blur"].map((name) => (
              <button type="button" key={name} aria-label={name} className={footerButton}>
                <Glyph name={name} className="size-5" />
              </button>
            ))}
            <button type="button" aria-label="Graph editor" className={`${footerButton} bg-[#484848] text-[#d0d0d0]`}>
              <Glyph name="graph" className="size-5" />
            </button>
          </div>
        </div>
        <LayerTable />
      </div>
      <div className="flex min-w-0 flex-1 pt-[7px]">
        <GraphEditor />
      </div>
    </div>
    <div className="flex h-[22px] w-[805px] items-center border-t border-black pl-[5px]">
      <button type="button" aria-label="Expand layer switches" className="rounded bg-[#484848] p-[2px]">
        <Glyph name="layersToggle" className="size-4" />
      </button>
      <button type="button" aria-label="Expand transfer controls" className="ml-[7px]">
        <Glyph name="modes" />
      </button>
      <button type="button" aria-label="Expand in and out" className="ml-[7px]">
        <Glyph name="braces" />
      </button>
      <button type="button" aria-label="Render time" className="ml-[8px]">
        <Glyph name="snail" />
      </button>
      <p className="ml-[35px] w-[212px]">
        Frame Render Time: <b className="ml-[2px] font-semibold text-[#5fd8ab]">0ms</b>
      </p>
      <button type="button">Toggle Switches / Modes</button>
      <div className="ml-auto flex items-center gap-2">
        <svg viewBox="0 0 14 8" className="h-[7px] w-3">
          <path d="M0 8l4-5 2 2 3-5 5 8z" fill="#b3b3b3" />
        </svg>
        <input
          type="range"
          aria-label="Timeline zoom"
          defaultValue={0}
          className="h-4 w-[75px] appearance-none bg-transparent [&::-webkit-slider-runnable-track]:h-[3px] [&::-webkit-slider-runnable-track]:rounded [&::-webkit-slider-runnable-track]:bg-[#4a4a4a] [&::-webkit-slider-thumb]:-mt-[5px] [&::-webkit-slider-thumb]:size-[13px] [&::-webkit-slider-thumb]:appearance-none [&::-webkit-slider-thumb]:rounded-full [&::-webkit-slider-thumb]:border-3 [&::-webkit-slider-thumb]:border-[#c0c0c0] [&::-webkit-slider-thumb]:bg-[#1d1d1d] [&::-webkit-slider-thumb]:shadow-[0_0_0_4px_#1d1d1d]"
        />
        <svg viewBox="0 0 20 10" className="mr-1 h-[10px] w-5">
          <path d="M0 10l5-8 2 2-4 6zM4 10l8-10 8 10z" fill="#b3b3b3" />
        </svg>
      </div>
    </div>
  </section>
);

const TaskbarApp: React.FC<{
  label: string;
  running?: boolean;
  children: React.ReactNode;
}> = ({ label, running, children }) => (
  <button
    type="button"
    aria-label={label}
    className="relative flex h-[50px] w-[55px] shrink-0 items-center justify-center"
  >
    <svg viewBox="0 0 32 32" className="size-8">
      {children}
    </svg>
    {running && (
      <span className="absolute bottom-0 h-1 w-2 rounded-full bg-[#9a9fa3]" />
    )}
  </button>
);

const Taskbar: React.FC = () => (
  <footer className="flex h-[60px] shrink-0 items-center border-t border-[#454b4f] bg-linear-to-r from-[#202a2e] via-[#1b2731] to-[#202a2e] pb-px text-white">
    <div className="flex w-[542px] items-center gap-[10px] pl-[25px]">
      <svg viewBox="0 0 29 32" className="h-8 w-[29px]">
        <g fill="#f7941d" stroke="#b9620c" strokeWidth="1">
          <rect x="1" y="16" width="22" height="7" rx="3.500" />
          <rect x="5" y="11" width="23" height="7" rx="3.500" />
          <rect x="1" y="6" width="22" height="7" rx="3.500" />
          <rect x="2" y="1" width="22" height="7" rx="3.500" />
        </g>
        <path d="M8 25h4l2 2 2-2h4l-6 6z" fill="#d2451e" />
      </svg>
      <div className="text-sm leading-5">
        <p>USD/JPY</p>
        <p className="text-[#ff99a4]">-%0,97</p>
      </div>
    </div>
    <button type="button" aria-label="Start" className="mr-[2px] flex w-[60px] shrink-0 justify-center">
      <svg viewBox="0 0 29 29" className="size-[29px]">
        <path d="M0 0h14v14H0z" fill="#7fdcff" />
        <path d="M15 0h14v14H15z" fill="#52c5fb" />
        <path d="M0 15h14v14H0z" fill="#3dbdfb" />
        <path d="M15 15h14v14H15z" fill="#12a0f5" />
      </svg>
    </button>
    <div className="relative w-[273px] shrink-0">
      <input
        type="text"
        aria-label="Ara"
        placeholder="Ara"
        className="block h-[38px] w-full rounded-full bg-[#f3f5f9] pl-[45px] text-[15px] text-[#444] placeholder:text-[#5a5a5a]"
      />
      <svg viewBox="0 0 20 20" className="absolute top-[9px] left-[13px] size-5">
        <g fill="none" stroke="#222" strokeWidth="1.800">
          <circle cx="8.500" cy="8.500" r="6.500" />
          <path d="M13 13l5.500 5.500" strokeWidth="2.500" />
        </g>
      </svg>
    </div>
    <div className="ml-1 flex">
      <TaskbarApp label="Task view">
        <rect x="1" y="10" width="22" height="20" rx="1" fill="#5c5f61" />
        <rect x="9" y="2" width="22" height="20" rx="1" fill="#f2f2f2" />
        <rect x="9" y="10" width="14" height="12" fill="#a8a8a8" />
      </TaskbarApp>
      <TaskbarApp label="YouTube Music">
        <circle cx="16" cy="16" r="15" fill="#f00" />
        <circle cx="16" cy="16" r="8" fill="none" stroke="#fff" strokeWidth="1.500" />
        <path d="M13 11l8 5-8 5z" fill="#fff" />
      </TaskbarApp>
      <TaskbarApp label="Copilot">
        <defs>
          <linearGradient id="cpA" x1="0" y1="0" x2="0" y2="1">
            <stop offset="0" stopColor="#1b8fe8" />
            <stop offset="0.600" stopColor="#48b88a" />
            <stop offset="1" stopColor="#f5c52f" />
          </linearGradient>
          <linearGradient id="cpB" x1="1" y1="0" x2="0" y2="1">
            <stop offset="0" stopColor="#a24cf0" />
            <stop offset="0.600" stopColor="#f0588e" />
            <stop offset="1" stopColor="#fb9a4b" />
          </linearGradient>
        </defs>
        <path d="M9 4h10c3 0 3 3 4 6h-5c-3 0-4 3-5 7-1 4-2 6-6 6-6 0-5-6-4-10S5 4 9 4z" fill="url(#cpA)" />
        <path d="M23 28H13c-3 0-3-3-4-6h5c3 0 4-3 5-7 1-4 2-6 6-6 6 0 5 6 4 10s-2 9-6 9z" fill="url(#cpB)" />
        <path d="M15 4h4c3 0 3 3 4 6h-5c-1 0-2-5-3-6z" fill="#1e50c0" />
      </TaskbarApp>
      <TaskbarApp label="File Explorer" running>
        <path d="M1 5q0-2 2-2h9l4 4h14q1 0 1 2v5H1z" fill="#d99512" />
        <path d="M1 9h30v20H1z" fill="#fcc93c" />
        <path d="M6 29v-6q0-2 2-2h16q2 0 2 2v6z" fill="#1478c8" />
        <path d="M10 25h12" stroke="#0b4a84" strokeWidth="2" />
      </TaskbarApp>
      <TaskbarApp label="Microsoft Store" running>
        <path d="M10 8V2h12v6" fill="none" stroke="#35b4ee" strokeWidth="2.500" />
        <path d="M2 7h28v21q0 3-3 3H5q-3 0-3-3z" fill="#f0f2f4" />
        <path d="M10 13h5.500v5.500H10z" fill="#f25022" />
        <path d="M16.500 13H22v5.500h-5.500z" fill="#7fba00" />
        <path d="M10 19.500h5.500V25H10z" fill="#00a4ef" />
        <path d="M16.500 19.500H22V25h-5.500z" fill="#ffb900" />
      </TaskbarApp>
      <TaskbarApp label="Get help">
        <circle cx="16" cy="17" r="14" fill="#0c94d8" stroke="#fff" strokeWidth="2" />
        <path d="M10.500 13c0-7 11-7 11 0 0 4-5 4-5 8" fill="none" stroke="#fff" strokeWidth="3.500" />
        <circle cx="16.500" cy="26" r="2.200" fill="#fff" />
        <circle cx="26" cy="6" r="9" fill="#ffc20e" />
      </TaskbarApp>
      <TaskbarApp label="Teams">
        <circle cx="18" cy="6" r="5" fill="#7b83eb" />
        <circle cx="27" cy="8" r="3.500" fill="#5059c9" />
        <path d="M23 12h8v9q0 5-5 5h-3z" fill="#5059c9" />
        <path d="M10 12h15v11q0 8-8 8-7 0-7-8z" fill="#7b83eb" />
        <rect x="0" y="9" width="16" height="15" rx="1.500" fill="#4b53bc" />
        <path d="M4.500 13h7M8 13v8" stroke="#fff" strokeWidth="2" />
      </TaskbarApp>
      <TaskbarApp label="Chrome" running>
        <circle cx="16" cy="17" r="14" fill="#fbc116" />
        <path d="M16 17L4 10A14 14 0 0 1 28 10z" fill="#e33b2e" />
        <path d="M16 17L4 10a14 14 0 0 0 11 21l6-11z" fill="#2aa04a" />
        <circle cx="16" cy="17" r="7" fill="#fff" />
        <circle cx="16" cy="17" r="5.500" fill="#4285f4" />
        <circle cx="25" cy="7" r="7" fill="#e8e4dc" />
        <path d="M20 5h4v3l-2 4M27 12V8l2-3v5" fill="none" stroke="#222" strokeWidth="2" />
        <circle cx="27" cy="5" r="1.800" fill="#a8823a" />
      </TaskbarApp>
      <button
        type="button"
        aria-label="After Effects"
        className="relative ml-[3px] flex h-[50px] w-[50px] items-center justify-center rounded border border-[#343b45] bg-[#2a303a]"
      >
        <span className="mb-1 flex size-[27px] items-center justify-center rounded bg-[#00005b] text-[15px] font-semibold text-[#a5a5ff]">
          Ae
        </span>
        <span className="absolute bottom-0 h-1 w-5 rounded-full bg-[#4cc2ff]" />
      </button>
    </div>
    <div className="ml-auto flex items-center pr-6">
      <button type="button" aria-label="Hidden icons">
        <ChevronUp className="size-5" strokeWidth={2} />
      </button>
      <svg viewBox="0 0 22 18" className="ml-5 h-[18px] w-[22px]">
        <path d="M2 14a5 5 0 0 1 2-8 7 7 0 0 1 13 1v6z" fill="#1a86dc" />
        <circle cx="15" cy="12" r="5.500" fill="#d13438" />
        <path d="M13 10l4 4M17 10l-4 4" stroke="#fff" strokeWidth="1.500" />
      </svg>
      <span className="ml-[21px] flex h-5 w-4 items-center justify-center rounded-full bg-[#0a84f0]">
        <Bluetooth className="size-[14px]" strokeWidth={2} />
      </span>
      <span className="ml-[26px] text-sm">TUR</span>
      <Wifi className="ml-6 size-5" strokeWidth={2} />
      <Volume2 className="ml-[10px] size-5" strokeWidth={1.500} />
      <svg viewBox="0 0 22 18" className="ml-[10px] h-[18px] w-[22px]">
        <path d="M8 4h9q2 0 2 2v6q0 2-2 2H4q-2 0-2-2V9" fill="none" stroke="#fff" strokeWidth="1.500" />
        <path d="M4 12V9l4-3v6zM20 7h2v4h-2zM5 0L1 6h2.500L2 10l5-6H4.500z" fill="#fff" />
      </svg>
      <div className="ml-5 text-right text-sm leading-5">
        <p>21:48</p>
        <p>1.09.2025</p>
      </div>
    </div>
  </footer>
);

function App() {
  return (
    <div className="flex min-h-screen flex-col bg-black font-['Open_Sans','Noto_Sans',sans-serif]">
      <TitleBar />
      <Toolbar />
      <main className="flex flex-1 gap-[6px] pt-[3px] pb-px">
        <div className="flex min-w-0 flex-1 flex-col gap-[6px] pl-px">
          <div className="flex flex-1 gap-[6px]">
            <ProjectPanel />
            <CompositionPanel />
          </div>
          <TimelinePanel />
        </div>
        <RightColumn />
      </main>
      <Taskbar />
    </div>
  );
}

export default App;
